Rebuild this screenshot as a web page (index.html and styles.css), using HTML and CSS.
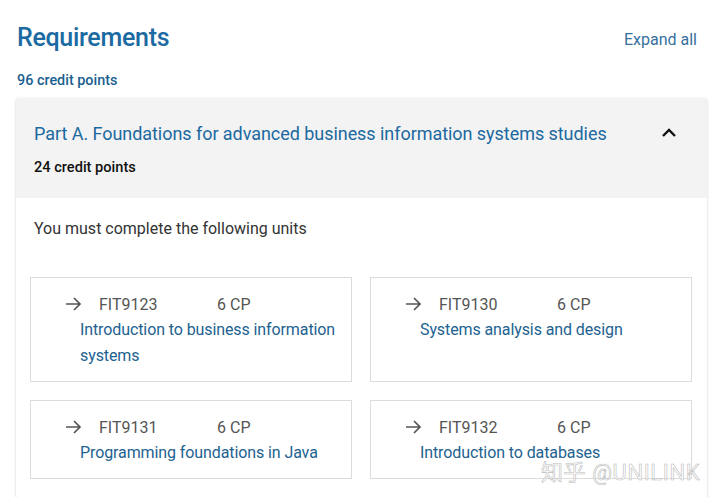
FILE: index.html
```html
<!DOCTYPE html>
<html>
<head>
<meta charset="utf-8">
<link rel="stylesheet" href="styles.css">
</head>
<body>
<div class="page">
  <div class="top">
    <h1 class="title">Requirements</h1>
    <a class="expand">Expand all</a>
  </div>
  <div class="total">96 credit points</div>
  <section class="part">
    <div class="part-head">
      <div class="part-row">
        <h2 class="part-title">Part A. Foundations for advanced business information systems studies</h2>
        <svg class="chev" width="16" height="12" viewBox="0 0 16 12"><path d="M2 9 L8 3 L14 9" fill="none" stroke="#111" stroke-width="2.4"/></svg>
      </div>
      <div class="part-cp">24 credit points</div>
    </div>
    <div class="part-body">
      <p class="intro">You must complete the following units</p>
      <div class="units">
        <div class="unit">
          <div class="meta"><svg class="arrow" width="17" height="14" viewBox="0 0 17 14"><path d="M1 7 H15 M9 1 L15 7 L9 13" fill="none" stroke="#555" stroke-width="1.7"/></svg><span class="code">FIT9123</span><span class="cp">6 CP</span></div>
          <div class="uname">Introduction to business information systems</div>
        </div>
        <div class="unit">
          <div class="meta"><svg class="arrow" width="17" height="14" viewBox="0 0 17 14"><path d="M1 7 H15 M9 1 L15 7 L9 13" fill="none" stroke="#555" stroke-width="1.7"/></svg><span class="code">FIT9130</span><span class="cp">6 CP</span></div>
          <div class="uname">Systems analysis and design</div>
        </div>
        <div class="unit">
          <div class="meta"><svg class="arrow" width="17" height="14" viewBox="0 0 17 14"><path d="M1 7 H15 M9 1 L15 7 L9 13" fill="none" stroke="#555" stroke-width="1.7"/></svg><span class="code">FIT9131</span><span class="cp">6 CP</span></div>
          <div class="uname">Programming foundations in Java</div>
        </div>
        <div class="unit">
          <div class="meta"><svg class="arrow" width="17" height="14" viewBox="0 0 17 14"><path d="M1 7 H15 M9 1 L15 7 L9 13" fill="none" stroke="#555" stroke-width="1.7"/></svg><span class="code">FIT9132</span><span class="cp">6 CP</span></div>
          <div class="uname">Introduction to databases</div>
        </div>
      </div>
    </div>
  </section>
</div>
<div class="watermark">知乎 @UNILINK</div>
</body>
</html>
```
FILE: styles.css
```css
html, body {
  margin: 0;
  padding: 0;
  background: #fff;
  font-family: Roboto, "Liberation Sans", "Noto Sans CJK SC", sans-serif;
}
.page {
  padding: 0 13px 0 16px;
}
.top {
  display: flex;
  justify-content: space-between;
  align-items: flex-end;
  height: 56px;
}
.title {
  margin: 0 0 0 1px;
  font-size: 25px;
  font-weight: 500;
  color: #1b6aa2;
  line-height: 30px;
  padding-bottom: 3px;
  letter-spacing: -0.3px;
}
.expand {
  font-size: 16px;
  color: #36709e;
  line-height: 20px;
  padding-bottom: 6px;
  margin-right: 10px;
}
.total {
  margin: 16px 0 0 1px;
  font-size: 14.4px;
  font-weight: 500;
  color: #1b5f90;
  line-height: 18px;
}
.part {
  margin-top: 8px;
  box-shadow: 0 1px 3px rgba(0,0,0,0.18);
  border-radius: 2px;
  background: #fff;
}
.part-head {
  background: #f3f3f3;
  padding: 24px 30px 21px 18px;
}
.part-row {
  display: flex;
  justify-content: space-between;
  align-items: center;
}
.part-title {
  margin: 0;
  font-size: 18px;
  font-weight: 400;
  color: #1b69a0;
  line-height: 24px;
  letter-spacing: -0.05px;
}
.chev {
  display: block;
  margin-top: -2px;
}
.part-cp {
  margin-top: 11px;
  font-size: 14.6px;
  font-weight: 500;
  color: #111;
  line-height: 20px;
}
.part-body {
  padding: 20px 15px 18px 14px;
}
.intro {
  margin: 0 0 0 4px;
  font-size: 16px;
  color: #333;
  line-height: 22px;
}
.units {
  margin-top: 37px;
  display: grid;
  grid-template-columns: 1fr 1fr;
  column-gap: 18px;
  row-gap: 18px;
}
.unit {
  border: 1px solid #dcdcdc;
  padding: 13px 12px 12px 49px;
}
.meta {
  display: flex;
  align-items: center;
  height: 26px;
  font-size: 16px;
  color: #555;
}
.arrow {
  margin-left: -15px;
  margin-right: 17px;
  display: block;
}
.code {
  width: 118px;
}
.uname {
  font-size: 16px;
  color: #226290;
  line-height: 26px;
  letter-spacing: -0.1px;
}
.watermark {
  position: absolute;
  left: 541px;
  top: 454px;
  font-size: 22px;
  color: rgba(255,255,255,0.6);
  -webkit-text-stroke: 0.6px #bdbdbd;
  letter-spacing: 0.6px;
}
```
